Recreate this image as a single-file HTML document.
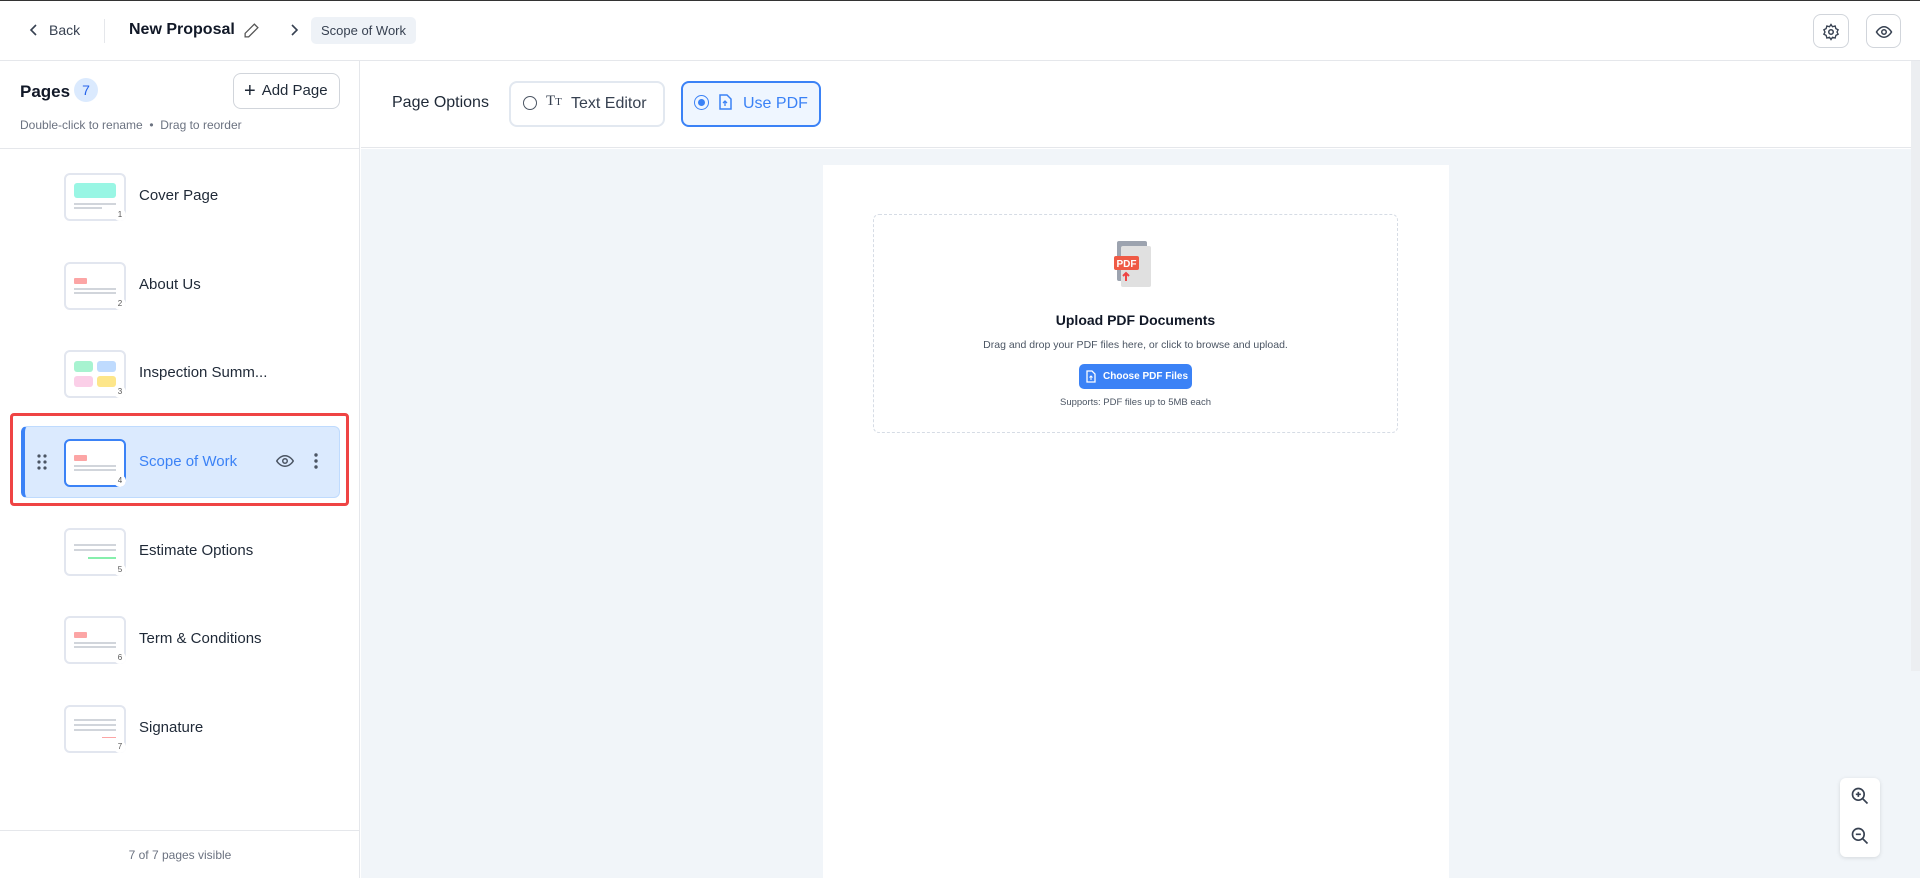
<!DOCTYPE html>
<html><head><meta charset="utf-8"><style>
*{box-sizing:border-box;margin:0;padding:0}
body{width:1920px;height:878px;overflow:hidden;font-family:"Liberation Sans",sans-serif;background:#fff;color:#111827;position:relative}
.abs{position:absolute;white-space:nowrap}
.top{left:0;top:0;width:1920px;height:61px;border-top:1px solid #333;border-bottom:1px solid #e5e7eb;background:#fff}
.side{left:0;top:61px;width:360px;height:817px;border-right:1px solid #e5e7eb;background:#fff}
.thumb{position:absolute;left:64px;width:62px;height:48px;border:2px solid #e2e6ef;border-radius:6px;background:#fff}
.num{position:absolute;right:-2px;bottom:-2px;width:12px;height:12px;border-radius:6px;background:#fff;font-size:8px;color:#555;text-align:center;line-height:12px}
.lbl{position:absolute;left:139px;font-size:15px;color:#1f2937;white-space:nowrap}
.ln{position:absolute;height:2px;background:#d1d5db}
.btn{border:2px solid #e2e8f0;border-radius:8px;background:#fff}
</style></head><body>
<div class="abs top">
 <svg class="abs" style="left:28px;top:22px" width="12" height="14" viewBox="0 0 12 14"><path d="M8 2L3 7l5 5" stroke="#374151" stroke-width="1.6" fill="none"/></svg>
 <div class="abs" style="left:49px;top:21px;font-size:14px;color:#374151">Back</div>
 <div class="abs" style="left:104px;top:18px;width:1px;height:24px;background:#e5e7eb"></div>
 <div class="abs" style="left:129px;top:20px;font-size:16px;font-weight:bold;color:#111827">New Proposal</div>
 <svg class="abs" style="left:243px;top:21px" width="17" height="17" viewBox="0 0 24 24"><path d="M16 3l5 5L8 21H3v-5z" stroke="#555" stroke-width="1.8" fill="none"/></svg>
 <svg class="abs" style="left:288px;top:22px" width="12" height="14" viewBox="0 0 12 14"><path d="M4 2l5 5-5 5" stroke="#374151" stroke-width="1.6" fill="none"/></svg>
 <div class="abs" style="left:311px;top:16px;width:105px;height:27px;background:#eef2f7;border-radius:5px;font-size:13px;color:#374151;line-height:27px;text-align:center">Scope of Work</div>
 <div class="abs btn" style="left:1813px;top:13px;width:36px;height:34px;border-width:1px;border-color:#d1d5db"><svg style="margin:8px" width="18" height="18" viewBox="0 0 24 24"><circle cx="12" cy="12" r="3" stroke="#374151" stroke-width="2" fill="none"/><path d="M12 2l2 3 3.5-1 1 3.5 3 1.5-1.5 3 1.5 3-3 1.5-1 3.5-3.5-1-2 3-2-3-3.5 1-1-3.5-3-1.5 1.5-3-1.5-3 3-1.5 1-3.5 3.5 1z" stroke="#374151" stroke-width="1.8" fill="none"/></svg></div>
 <div class="abs btn" style="left:1866px;top:13px;width:35px;height:34px;border-width:1px;border-color:#d1d5db"><svg style="margin:8px" width="18" height="18" viewBox="0 0 24 24"><path d="M2 12s4-7 10-7 10 7 10 7-4 7-10 7S2 12 2 12z" stroke="#374151" stroke-width="2" fill="none"/><circle cx="12" cy="12" r="3" stroke="#374151" stroke-width="2" fill="none"/></svg></div>
</div>
<div class="abs side">
 <div class="abs" style="left:20px;top:21px;font-size:17px;font-weight:bold">Pages</div>
 <div class="abs" style="left:74px;top:17px;width:24px;height:24px;border-radius:12px;background:#dbeafe;color:#2563eb;font-size:14px;text-align:center;line-height:24px">7</div>
 <div class="abs btn" style="left:233px;top:12px;width:107px;height:36px;border-width:1px;border-color:#d1d5db;font-size:15px;line-height:34px;color:#1f2937;padding-left:10px"><span style="font-size:20px;vertical-align:-2px;margin-right:6px">+</span>Add Page</div>
 <div class="abs" style="left:20px;top:57px;font-size:12px;color:#6b7280">Double-click to rename &nbsp;•&nbsp; Drag to reorder</div>
 <div class="abs" style="left:0;top:87px;width:360px;height:1px;background:#e5e7eb"></div>

 <div class="thumb" style="top:112px"><div class="abs" style="left:8px;top:8px;width:42px;height:15px;background:#99f6e4;border-radius:3px"></div><div class="ln" style="left:8px;top:28px;width:42px"></div><div class="ln" style="left:8px;top:32px;width:28px"></div><div class="num">1</div></div>
 <div class="lbl" style="top:126px">Cover Page</div>
 <div class="thumb" style="top:201px"><div class="abs" style="left:8px;top:14px;width:13px;height:6px;background:#fca5a5;border-radius:1px"></div><div class="ln" style="left:8px;top:24px;width:42px"></div><div class="ln" style="left:8px;top:28px;width:42px"></div><div class="num">2</div></div>
 <div class="lbl" style="top:215px">About Us</div>
 <div class="thumb" style="top:289px"><div class="abs" style="left:8px;top:9px;width:19px;height:11px;background:#a7f3d0;border-radius:3px"></div><div class="abs" style="left:31px;top:9px;width:19px;height:11px;background:#bfdbfe;border-radius:3px"></div><div class="abs" style="left:8px;top:24px;width:19px;height:11px;background:#fbcfe8;border-radius:3px"></div><div class="abs" style="left:31px;top:24px;width:19px;height:11px;background:#fde68a;border-radius:3px"></div><div class="num">3</div></div>
 <div class="lbl" style="top:303px">Inspection Summ...</div>

 <div class="abs" style="left:10px;top:352px;width:339px;height:93px;border:3px solid #ef4444;border-radius:4px"></div>
 <div class="abs" style="left:21px;top:365px;width:319px;height:72px;background:#dbeafe;border:1px solid #bfdbfe;border-radius:6px;border-left:4px solid #3b82f6"></div>
 <svg class="abs" style="left:37px;top:393px" width="10" height="16"><g fill="#4b5563"><circle cx="2" cy="2" r="1.6"/><circle cx="8" cy="2" r="1.6"/><circle cx="2" cy="8" r="1.6"/><circle cx="8" cy="8" r="1.6"/><circle cx="2" cy="14" r="1.6"/><circle cx="8" cy="14" r="1.6"/></g></svg>
 <div class="thumb" style="top:378px;border-color:#3b82f6"><div class="abs" style="left:8px;top:14px;width:13px;height:6px;background:#fca5a5;border-radius:1px"></div><div class="ln" style="left:8px;top:24px;width:42px"></div><div class="ln" style="left:8px;top:28px;width:42px"></div><div class="num">4</div></div>
 <div class="lbl" style="top:392px;color:#3b82f6">Scope of Work</div>
 <svg class="abs" style="left:276px;top:393px" width="18" height="14" viewBox="0 0 24 18"><path d="M1 9s4-7 11-7 11 7 11 7-4 7-11 7S1 9 1 9z" stroke="#4b5563" stroke-width="2" fill="none"/><circle cx="12" cy="9" r="3" stroke="#4b5563" stroke-width="2" fill="none"/></svg>
 <svg class="abs" style="left:313px;top:392px" width="6" height="16"><g fill="#4b5563"><circle cx="3" cy="2" r="1.7"/><circle cx="3" cy="8" r="1.7"/><circle cx="3" cy="14" r="1.7"/></g></svg>

 <div class="thumb" style="top:467px"><div class="ln" style="left:8px;top:14px;width:42px"></div><div class="ln" style="left:8px;top:19px;width:42px"></div><div class="abs" style="left:22px;top:27px;width:28px;height:2px;background:#86efac"></div><div class="num">5</div></div>
 <div class="lbl" style="top:481px">Estimate Options</div>
 <div class="thumb" style="top:555px"><div class="abs" style="left:8px;top:14px;width:13px;height:6px;background:#fca5a5;border-radius:1px"></div><div class="ln" style="left:8px;top:24px;width:42px"></div><div class="ln" style="left:8px;top:28px;width:42px"></div><div class="num">6</div></div>
 <div class="lbl" style="top:569px">Term &amp; Conditions</div>
 <div class="thumb" style="top:644px"><div class="ln" style="left:8px;top:12px;width:42px"></div><div class="ln" style="left:8px;top:17px;width:42px"></div><div class="ln" style="left:8px;top:22px;width:42px"></div><div class="abs" style="left:36px;top:30px;width:14px;height:1px;background:#fca5a5"></div><div class="num">7</div></div>
 <div class="lbl" style="top:658px">Signature</div>

 <div class="abs" style="left:0;top:769px;width:360px;height:1px;background:#e5e7eb"></div>
 <div class="abs" style="left:0;top:787px;width:360px;text-align:center;font-size:12px;color:#6b7280">7 of 7 pages visible</div>
</div>
<div class="abs" style="left:361px;top:61px;width:1559px;height:87px;border-bottom:1px solid #e5e7eb;background:#fff"></div>
<div class="abs" style="left:392px;top:94px;font-size:16px;color:#1f2937">Page Options</div>
<div class="abs btn" style="left:509px;top:81px;width:156px;height:46px"></div>
<div class="abs" style="left:523px;top:96px;width:14px;height:14px;border:1.5px solid #4b5563;border-radius:7px"></div>
<div class="abs" style="left:546px;top:93px;font-size:15px;font-family:'Liberation Serif',serif;color:#374151">T<span style="font-size:11px">T</span></div>
<div class="abs" style="left:571px;top:95px;font-size:16px;color:#374151">Text Editor</div>
<div class="abs btn" style="left:681px;top:81px;width:140px;height:46px;background:#eff6ff;border-color:#3b82f6"></div>
<div class="abs" style="left:694px;top:95px;width:15px;height:15px;border:1.5px solid #3b82f6;border-radius:8px"><div style="margin:2.5px;width:7px;height:7px;border-radius:4px;background:#3b82f6"></div></div>
<svg class="abs" style="left:718px;top:94px" width="14" height="16" viewBox="0 0 14 16"><path d="M2 1h7l4 4v10H2z" stroke="#3b82f6" stroke-width="1.5" fill="none"/><path d="M7 12V7M5 9l2-2 2 2" stroke="#3b82f6" stroke-width="1.3" fill="none"/></svg>
<div class="abs" style="left:743px;top:95px;font-size:16px;color:#3b82f6">Use PDF</div>

<div class="abs" style="left:361px;top:149px;width:1559px;height:729px;background:#f1f5f9"></div>
<div class="abs" style="left:1911px;top:61px;width:9px;height:610px;background:#eceef1"></div>
<div class="abs" style="left:823px;top:165px;width:626px;height:713px;background:#fff"></div>
<div class="abs" style="left:873px;top:214px;width:525px;height:219px;border:1px dashed #d6dce5;border-radius:6px"></div>
<svg class="abs" style="left:1113px;top:241px" width="40" height="46" viewBox="0 0 40 46"><rect x="4" y="0" width="30" height="40" rx="2" fill="#9ca3af"/><rect x="8" y="5" width="30" height="41" rx="2" fill="#e0e0e0"/><rect x="1" y="15" width="25" height="14" rx="2" fill="#ef5a45"/><text x="13.5" y="26" font-size="10" font-family="Liberation Sans" fill="#fff" text-anchor="middle" font-weight="bold">PDF</text><path d="M13 40v-8M10 35l3-3 3 3" stroke="#ef4444" stroke-width="2" fill="none"/></svg>
<div class="abs" style="left:873px;top:312px;width:525px;text-align:center;font-size:14px;font-weight:bold;color:#111827">Upload PDF Documents</div>
<div class="abs" style="left:873px;top:339px;width:525px;text-align:center;font-size:10.5px;color:#4b5563">Drag and drop your PDF files here, or click to browse and upload.</div>
<div class="abs" style="left:1079px;top:364px;width:113px;height:25px;background:#3b82f6;border-radius:5px;color:#fff;font-size:10px;font-weight:bold;line-height:25px;padding-left:24px">Choose PDF Files</div>
<svg class="abs" style="left:1086px;top:370px" width="10" height="13" viewBox="0 0 10 13"><path d="M1 1h5l3 3v8H1z" stroke="#fff" stroke-width="1.3" fill="none"/><path d="M5 10V6M3.5 7.5L5 6l1.5 1.5" stroke="#fff" stroke-width="1" fill="none"/></svg>
<div class="abs" style="left:873px;top:397px;width:525px;text-align:center;font-size:9.5px;color:#4b5563">Supports: PDF files up to 5MB each</div>

<div class="abs" style="left:1840px;top:778px;width:40px;height:79px;background:#fff;border-radius:6px;box-shadow:0 1px 4px rgba(0,0,0,.12)"></div>
<svg class="abs" style="left:1850px;top:786px" width="20" height="20" viewBox="0 0 24 24"><circle cx="10" cy="10" r="7" stroke="#374151" stroke-width="2" fill="none"/><path d="M15 15l6 6M7 10h6M10 7v6" stroke="#374151" stroke-width="2"/></svg>
<svg class="abs" style="left:1850px;top:826px" width="20" height="20" viewBox="0 0 24 24"><circle cx="10" cy="10" r="7" stroke="#374151" stroke-width="2" fill="none"/><path d="M15 15l6 6M7 10h6" stroke="#374151" stroke-width="2"/></svg>
</body></html>
